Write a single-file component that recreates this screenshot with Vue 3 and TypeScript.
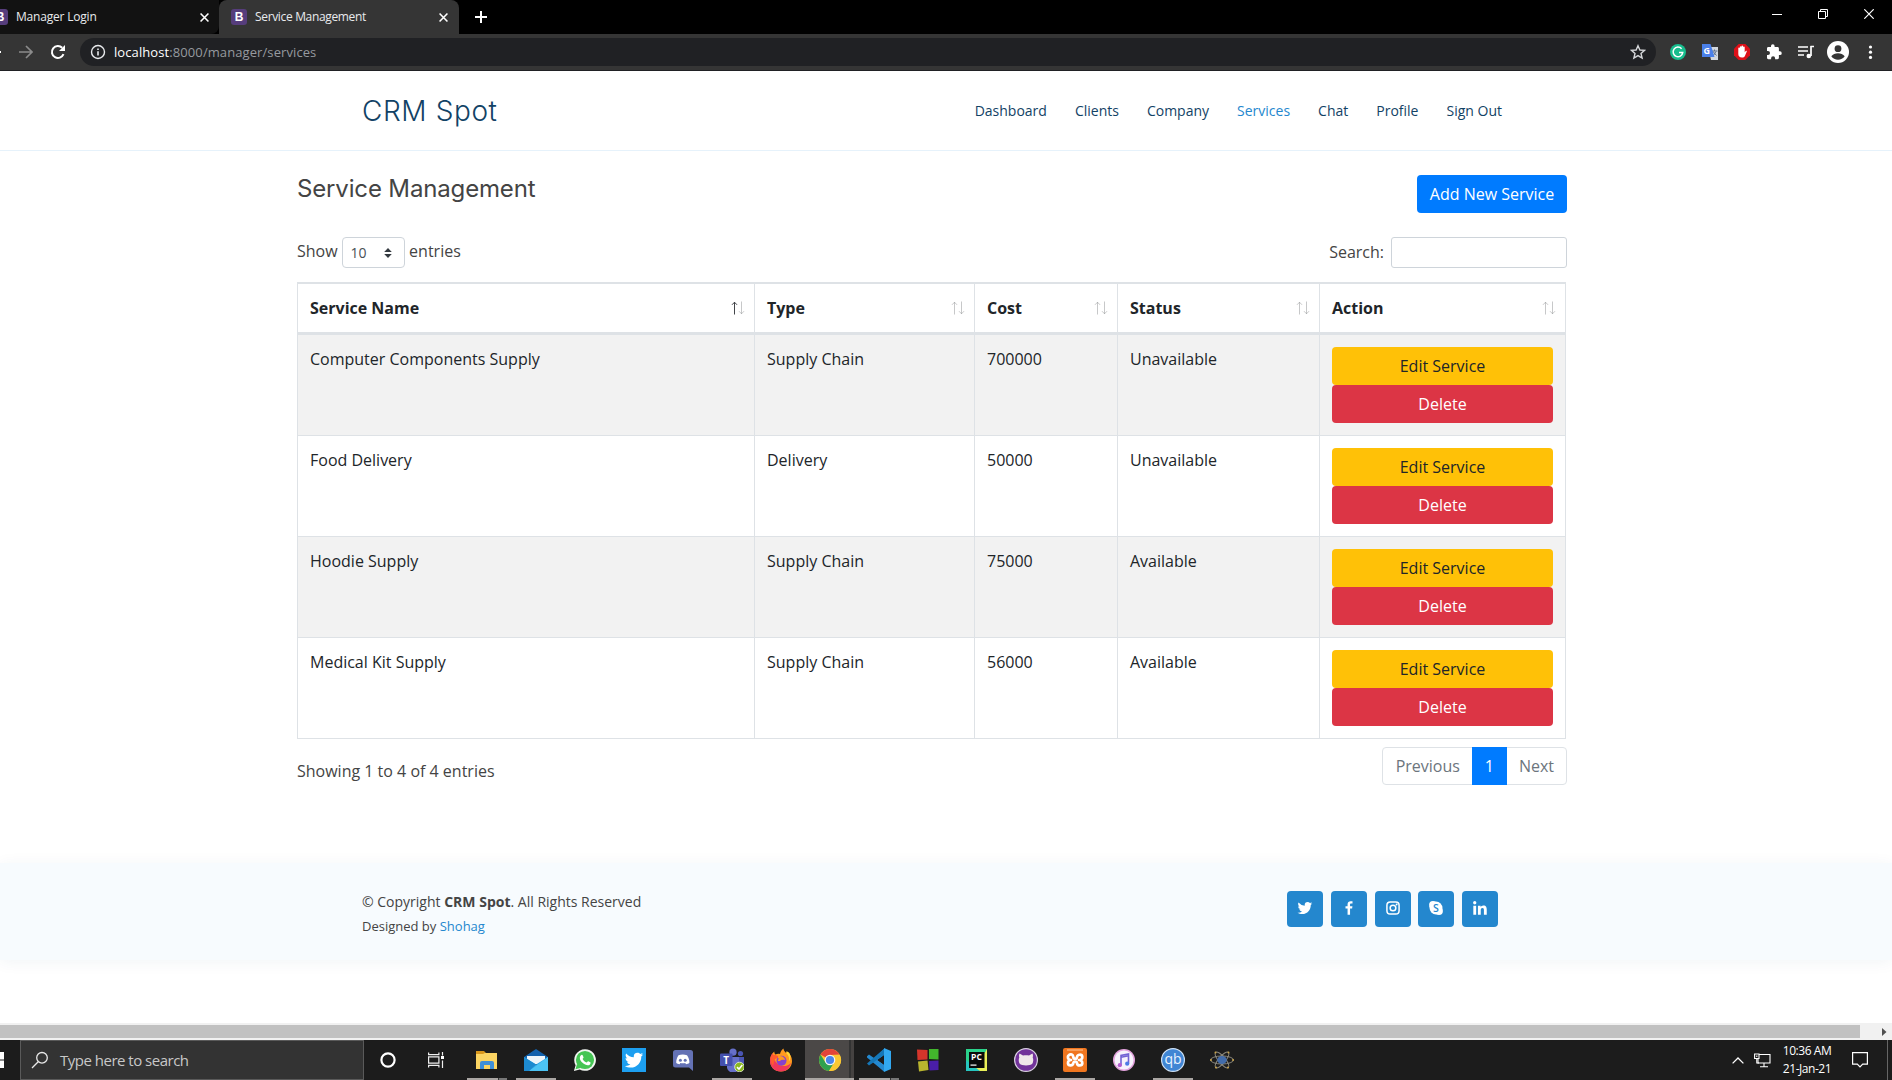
<script setup lang="ts">
interface Service { name: string; type: string; cost: string; status: string }
interface TaskIcon { id: string; art: string; run?: 'full' | 'stack'; active?: boolean }

const tabs = [
  { title: 'Manager Login', active: false },
  { title: 'Service Management', active: true },
]

const nav: string[] = ['Dashboard', 'Clients', 'Company', 'Services', 'Chat', 'Profile', 'Sign Out']
const columns: string[] = ['Service Name', 'Type', 'Cost', 'Status', 'Action']

const services: Service[] = [
  { name: 'Computer Components Supply', type: 'Supply Chain', cost: '700000', status: 'Unavailable' },
  { name: 'Food Delivery', type: 'Delivery', cost: '50000', status: 'Unavailable' },
  { name: 'Hoodie Supply', type: 'Supply Chain', cost: '75000', status: 'Available' },
  { name: 'Medical Kit Supply', type: 'Supply Chain', cost: '56000', status: 'Available' },
]

const bird = 'M19.633 7.997c.013.175.013.349.013.523 0 5.325-4.053 11.461-11.46 11.461-2.282 0-4.402-.661-6.186-1.809.324.037.636.05.973.05a8.07 8.07 0 0 0 5.001-1.721 4.036 4.036 0 0 1-3.767-2.793c.249.037.499.062.761.062.361 0 .724-.05 1.061-.137a4.027 4.027 0 0 1-3.23-3.953v-.05c.537.299 1.16.486 1.82.511a4.022 4.022 0 0 1-1.796-3.354c0-.748.199-1.434.548-2.032a11.457 11.457 0 0 0 8.306 4.215c-.062-.3-.1-.611-.1-.923a4.026 4.026 0 0 1 4.028-4.028c1.16 0 2.207.486 2.943 1.272a7.957 7.957 0 0 0 2.556-.973 4.02 4.02 0 0 1-1.771 2.22 8.073 8.073 0 0 0 2.319-.624 8.645 8.645 0 0 1-2.019 2.083z'

const socials = [
  { id: 'twitter', art: `<path d="${bird}"/>` },
  { id: 'facebook', art: '<path d="M13.397 20.997v-8.196h2.765l.411-3.209h-3.176V7.548c0-.926.258-1.56 1.587-1.56h1.684V3.127A22.336 22.336 0 0 0 14.201 3c-2.444 0-4.122 1.492-4.122 4.231v2.355H7.332v3.209h2.753v8.202h3.312z"/>' },
  { id: 'instagram', art: '<rect x="3.9" y="3.9" width="16.2" height="16.2" rx="4.4" fill="none" stroke="#fff" stroke-width="2"/><circle cx="12" cy="12" r="3.8" fill="none" stroke="#fff" stroke-width="2"/><circle cx="16.8" cy="7.2" r="1.3"/>' },
  { id: 'skype', art: '<circle cx="8" cy="8" r="5.2"/><circle cx="16" cy="16" r="5.2"/><circle cx="12" cy="12" r="8.6"/><text x="12" y="17" text-anchor="middle" font-family="Open Sans, sans-serif" font-weight="600" font-size="14" fill="#2487ce">S</text>' },
  { id: 'linkedin', art: '<circle cx="4.983" cy="5.009" r="2.188"/><path d="M9.237 8.855v12.139h3.769v-6.003c0-1.584.298-3.118 2.262-3.118 1.937 0 1.961 1.811 1.961 3.218v5.904H21v-6.657c0-3.27-.704-5.783-4.526-5.783-1.835 0-3.065 1.007-3.568 1.96h-.051v-1.66H9.237zm-6.142 0H6.87v12.139H3.095z"/>' },
]

const taskIcons: TaskIcon[] = [
  { id: 'explorer', run: 'stack', art: '<path d="M1 3h8l2 2h11v4H1z" fill="#d9971c"/><path d="M1 6h7l2-1h12v16H1z" fill="#fbd462"/><path d="M5 21v-6a2 2 0 0 1 2-2h10a2 2 0 0 1 2 2v6h-4v-4H9v4z" fill="#3f8fd8"/>' },
  { id: 'mail', run: 'full', art: '<path d="M0 9 12 1l12 8v3H0z" fill="#1261ad"/><path d="M3 8h18v8H3z" fill="#eef5fa"/><path d="M0 9l12 7.5L24 9v14H0z" fill="#2ea5e4"/><path d="M24 9v14H5z" fill="#4cc3f4"/><path d="M0 9l12 7.5L5 23H0z" fill="#1d8ad0"/>' },
  { id: 'whatsapp', art: '<path d="M12 1.200a10.800 10.800 0 1 1-5.200 20.200L.9 23l1.700-5.700A10.800 10.800 0 0 1 12 1.200z" fill="#f1f6f1"/><circle cx="12" cy="12" r="9.100" fill="#45c554"/><path d="M2.500 21.300l1.600-5.500 4 4z" fill="#45c554"/><path d="M7.900 7.300c.8-.9 1.500-.7 1.900.2l.7 1.700c.2.600-.7 1.300-.9 1.700 1 1.900 2.300 3 4.100 3.700.5-.3 1-1.600 1.600-1.300l2 1c.7.4.1 2-.9 2.600-3 1.700-9.700-2.900-9.600-7.100 0-.9.4-1.900 1.100-2.500z" fill="#fff"/>' },
  { id: 'twitter', art: `<path d="M0 0h24v24H0z" fill="#1d9ff0"/><g transform="translate(1 1) scale(.93)"><path d="${bird}" fill="#fff"/></g>` },
  { id: 'discord', art: '<path d="M4.500 2h15A2.500 2.500 0 0 1 22 4.500V23l-4-3.500H4.500A2.500 2.500 0 0 1 2 17V4.500A2.500 2.500 0 0 1 4.500 2z" fill="#6472b5"/><path d="M7.500 7.200c2.500-1 6-1 8.500 0 1.700 2.400 2.500 5 2.400 7.500-1 1-2.200 1.400-3.400 1.500l-.8-1.200c-1.500.4-3.300.4-4.800 0l-.9 1.200c-1.200-.1-2.400-.5-3.300-1.500 0-2.600.7-5.100 2.300-7.500z" fill="#fff"/><circle cx="9.400" cy="12.200" r="1.500" fill="#6472b5"/><circle cx="14.200" cy="12.200" r="1.500" fill="#6472b5"/>' },
  { id: 'teams', run: 'full', art: '<circle cx="13" cy="4.200" r="3.600" fill="#6670c9"/><circle cx="20.500" cy="5.500" r="2.600" fill="#4a55b3"/><path d="M16 9h8v8a5 5 0 0 1-6 4.500z" fill="#4a55b3"/><path d="M7 9h12v8a6 6 0 0 1-12 3z" fill="#6670c9"/><rect x="0" y="5.500" width="12.500" height="12.500" rx="1" fill="#4450ae"/><text x="6.200" y="15.600" text-anchor="middle" font-family="Open Sans, sans-serif" font-weight="700" font-size="10" fill="#fff">T</text><circle cx="19.500" cy="19" r="4.800" fill="#8ab81e" stroke="#eef4dc" stroke-width=".8"/><path d="m17 19.100 2 2 3.300-4" fill="none" stroke="#fff" stroke-width="1.500"/>' },
  { id: 'firefox', art: '<path d="M12 23.500C5.400 23.500 1 18.700 1 13c0-4 1.800-7.500 4.300-9.500 0 1.500.4 2.300 1.200 3C8 5.500 10 5.500 11 6c.5-2.500 1.800-4.300 3.500-5.500.2 2.300 1.300 3.200 2.700 4.500.4-.5.500-1 .5-1.700C21.500 6 23 9.500 23 13c0 6-4.600 10.500-11 10.500z" fill="#ff9a1f"/><path d="M12 23.500C5.400 23.500 1 18.700 1 13c0-3 .9-5.800 2.500-8 .3 7 5.500 14 13 13 2-.3 4-1.500 5.500-3-1.200 5-5 8.500-10 8.500z" fill="#f0385a"/><path d="M2 8c1-1 3-1.500 4.500-1L11 9 6 11 4 18C1.500 15 1.300 11 2 8z" fill="#ff5b2e"/><circle cx="12.500" cy="12.700" r="5" fill="#8742cc"/><path d="M9 9c2 .5 4 .2 5 1.500-2 0-4 1-4 2.500" fill="none" stroke="#ff9a1f" stroke-width="2.400"/><path d="M14.500.5c.2 2.300 1.300 3.200 2.700 4.500 2.800 2.500 3.300 5.500 2.600 8.500 2-1.700 2-6 .7-8.200-.8-1-2-1.500-2.800-2-.2.700-.1 1.200-.5 1.700C15.800 3.700 14.700 2.800 14.500.5z" fill="#ffd93a"/>' },
  { id: 'chrome', active: true, art: '<circle cx="12" cy="12" r="11" fill="#fbc832"/><path d="M12 12 2.500 6.500A11 11 0 0 1 21.500 6.500L12 7z" fill="#e2443a"/><path d="M2.500 6.500A11 11 0 0 0 11 23l5.500-8.500L12 12 7.500 14.500z" fill="#2fa150"/><path d="M12 7h9.800A11 11 0 0 1 11 23l5.300-8.500z" fill="#fbc832"/><circle cx="12" cy="12" r="5.300" fill="#f5f5f5"/><circle cx="12" cy="12" r="4.100" fill="#4a86ea"/>' },
  { id: 'vscode', run: 'stack', art: '<path d="M17 1 5.500 12 17 23.500V17l-7-5 7-5z" fill="#2a9be6"/><path d="M0 8.200 2 6.500 17 17v6.500L0 9.500z" fill="#2489d0"/><path d="M0 15.500 17 .8V7L2 17.500z" fill="#1577b8"/><path d="M17 0l7 3v18l-7 3z" fill="#32a8f0"/>' },
  { id: 'blocks', art: '<path d="M1 1.500 11.500 2v9.500L1.500 12z" fill="#d5352b"/><path d="M13 1h9.500v10.500L13 11z" fill="#42b62c"/><path d="M2 13.500l9.500-1 1 9.500L3 23.500z" fill="#b9b52e"/><path d="M13 13l9.500-.5V22l-9 .5z" fill="#4a1ea8"/>' },
  { id: 'pycharm', art: '<path d="M1 1h21v22H1z" fill="#2bd28c"/><path d="M22 1v22H9z" fill="#e9ef58"/><path d="M1 23V12l14 11z" fill="#27c6c0"/><path d="M4 4h15.500v16H4z" fill="#0a0a0a"/><text x="11.500" y="12.300" text-anchor="middle" font-family="Open Sans, sans-serif" font-weight="700" font-size="8.500" fill="#fff">PC</text><path d="M5.500 16.500h6v1.200h-6z" fill="#fff"/>' },
  { id: 'github', art: '<circle cx="12" cy="12" r="11.400" fill="#72339a" stroke="#d8cfe0" stroke-width="1.200"/><path d="M5.500 5.500 9 7.500c2-.5 4-.5 6 0l3.500-2c.6 1.500.6 2.800.2 4 .8 1.300.8 4.500-.4 6.200-2 2.300-10.600 2.300-12.600 0-1.200-1.700-1.200-4.900-.4-6.200-.4-1.200-.4-2.500.2-4z" fill="#f0e8ea"/>' },
  { id: 'xampp', run: 'full', art: '<rect width="24" height="24" rx="2" fill="#f0761f"/><path d="M4 2h16" stroke="#ffc898"/><path d="M5.500 7.300C8 5.500 10 6.500 10.300 9c.3 2.300 3.400 2.300 3.700 0 .4-3 5-3 5.300-.2.200 2-1.500 3.200-3.300 3.200 1.800 0 3.500 1.400 3.300 3.400-.3 2.700-4.900 2.700-5.300-.2-.3-2.300-3.400-2.300-3.700 0-.4 2.900-5 2.900-5.300.2C4.800 13.400 6.200 12 8 12c-1.800 0-3.200-1.200-3.100-3 0-.7.200-1.200.6-1.700" fill="none" stroke="#fff" stroke-width="2.700" stroke-linejoin="round"/>' },
  { id: 'itunes', art: '<circle cx="12" cy="12" r="11" fill="#e3a3dd"/><circle cx="12" cy="12" r="9.500" fill="#f7f2fc"/><path d="M9 17.300V7.500l7.500-1.600v9.600M9 9.300l7.500-1.600" fill="none" stroke="#7362d4" stroke-width="1.600"/><circle cx="7.800" cy="17.200" r="2.100" fill="#b45cd0"/><circle cx="15.200" cy="15.700" r="2.100" fill="#4d7be6"/>' },
  { id: 'qbittorrent', run: 'full', art: '<circle cx="12" cy="12" r="11.400" fill="#4086d4" stroke="#cfe2f6" stroke-width="1.200"/><text x="12" y="16" text-anchor="middle" font-family="Open Sans, sans-serif" font-size="14" fill="#eaf4ff">qb</text>' },
  { id: 'atom', art: '<g fill="none" stroke="#8a877c" stroke-width="1"><ellipse cx="12" cy="12" rx="11.500" ry="4"/><ellipse cx="12" cy="12" rx="10" ry="3.400" transform="rotate(50 12 12)"/><ellipse cx="12" cy="12" rx="10" ry="3.400" transform="rotate(-50 12 12)"/></g><ellipse cx="12" cy="12" rx="4.800" ry="4" fill="#426cab"/><g fill="#c9a348"><circle cx="5.500" cy="4.500" r="1"/><circle cx="18.500" cy="4.500" r="1"/><circle cx="1" cy="12" r="1"/><circle cx="23" cy="12" r="1"/><circle cx="6" cy="19.500" r="1"/><circle cx="18" cy="19.500" r="1"/></g>' },
]
</script>

<template>
  <div class="screen">
    <header class="tabstrip">
      <div v-for="t in tabs" :key="t.title" class="tab" :class="{ on: t.active }">
        <span class="favicon">B</span>
        <span class="tab-title">{{ t.title }}</span>
        <svg class="tab-x" width="9" height="9" viewBox="0 0 8 8"><path d="M.5.5l7 7M7.500.5l-7 7" stroke="#fff" stroke-width="1.400" /></svg>
      </div>
      <svg class="plus" width="12" height="12" viewBox="0 0 12 12"><path d="M6 0v12M0 6h12" stroke="#fff" stroke-width="2" /></svg>
      <div class="winctl">
        <svg width="10" height="10" viewBox="0 0 10 10"><path d="M0 5.500h10" stroke="#fff" /></svg>
        <svg width="10" height="10" viewBox="0 0 10 10" fill="none" stroke="#fff"><path d="M.5 2.500h7v7h-7zM2.500 2.500v-2h7v7h-2" /></svg>
        <svg width="10" height="10" viewBox="0 0 10 10"><path d="M.3.3l9.400 9.400M9.700.3.3 9.700" stroke="#fff" stroke-width="1.200" /></svg>
      </div>
    </header>

    <div class="toolbar">
      <span class="backtail"></span>
      <svg class="fwd" width="14" height="14" viewBox="0 0 14 14" fill="none" stroke="#8b8b8b" stroke-width="1.700"><path d="M0 7h12.500M7 1l6 6-6 6" /></svg>
      <svg class="reload" width="16" height="16" viewBox="0 0 16 16"><path d="M13.500 10.200A6 6 0 1 1 12.200 3.800" fill="none" stroke="#fff" stroke-width="2" /><path d="M15 1v6H9z" fill="#fff" /></svg>
      <div class="omnibox">
        <svg width="16" height="16" viewBox="0 0 16 16"><circle cx="8" cy="8" r="6.500" fill="none" stroke="#e8eaed" stroke-width="1.400" /><path d="M7.200 7.200h1.600v4.300H7.200zM7.200 4.500h1.600v1.600H7.200z" fill="#e8eaed" /></svg>
        <span class="url"><b>localhost</b>:8000/manager/services</span>
        <svg class="star" width="16" height="16" viewBox="0 0 16 16"><path d="M8 1.700 9.900 6l4.700.4-3.600 3.100 1.100 4.600L8 11.600l-4.100 2.500L5 9.500 1.400 6.400 6.100 6z" fill="none" stroke="#d5d7da" stroke-width="1.400" /></svg>
      </div>
      <div class="exts">
        <svg viewBox="0 0 24 24" width="24" height="24"><circle cx="12" cy="12" r="8" fill="#17bd8d" /><path d="M15.600 8.800a4.800 4.800 0 1 0 1.100 3.800h-3.700" fill="none" stroke="#fff" stroke-width="1.500" /></svg>
        <svg viewBox="0 0 24 24" width="24" height="24"><path d="M10 7h10v13h-7z" fill="#d2d7de" /><path d="M13.500 11h6M16.500 9.500v1.500m-2 6 3.500-5.500m-3 0 3.500 4" stroke="#5d6f8c" fill="none" /><path d="M4 4h8.500l4 13H4z" fill="#4a80ea" /><text x="8.700" y="13.500" text-anchor="middle" class="glyph" font-size="9">G</text></svg>
        <svg viewBox="0 0 24 24" width="24" height="24"><path d="M8.700 4h6.600L20 8.700v6.600L15.300 20H8.700L4 15.300V8.700z" fill="#dd1018" /><path d="M8.300 12V8.300a.8.8 0 0 1 1.600 0V7a.8.8 0 0 1 1.600 0v-.6a.8.8 0 0 1 1.600 0V7.200a.8.8 0 0 1 1.600 0v5l1-1.200c.7-.6 1.400 0 1 .7l-1.800 4.200c-.6 1.300-1.500 1.700-3 1.700-2.300 0-3.600-1.200-3.600-3.500z" fill="#fff" /></svg>
        <svg viewBox="0 0 24 24" width="24" height="24"><path d="M17.300 11.300h-1V8.400c0-.8-.6-1.400-1.400-1.400H12V6a1.800 1.800 0 0 0-3.600 0v1H5.800c-.8 0-1.400.6-1.400 1.400v2.700h1a2 2 0 0 1 0 4h-1v2.700c0 .8.6 1.400 1.400 1.400h2.700v-1a2 2 0 0 1 4 0v1h2.400c.8 0 1.400-.6 1.400-1.400V15h1a1.850 1.850 0 0 0 0-3.700z" fill="#fff" transform="translate(.6 0)" /></svg>
        <svg viewBox="0 0 24 24" width="24" height="24"><path d="M4 7h10M4 11h10M4 15h6" stroke="#fff" stroke-width="1.500" /><path d="M16.500 6.500h3.500M17 6v10" stroke="#fff" stroke-width="1.700" fill="none" /><circle cx="14.800" cy="16" r="2.300" fill="#fff" /></svg>
        <svg viewBox="0 0 24 24" width="24" height="24"><circle cx="12" cy="12" r="11" fill="#fff" /><circle cx="12" cy="8.700" r="3.400" fill="#353535" /><path d="M5.300 16.200c1.500-2 4-3 6.700-3s5.200 1 6.700 3a8 8 0 0 1-13.400 0z" fill="#353535" /></svg>
        <svg viewBox="0 0 24 24" width="24" height="24" fill="#fff"><circle cx="12.500" cy="7" r="1.600" /><circle cx="12.500" cy="12.200" r="1.600" /><circle cx="12.500" cy="17.400" r="1.600" /></svg>
      </div>
    </div>

    <main class="page">
      <div class="site-head">
        <span class="logo">CRM Spot</span>
        <nav><a v-for="n in nav" :key="n" :class="{ cur: n === 'Services' }">{{ n }}</a></nav>
      </div>

      <section class="content">
        <div class="title-row">
          <h1>Service Management</h1>
          <button class="btn primary">Add New Service</button>
        </div>
        <div class="tools">
          <div class="length">
            <span>Show</span>
            <span class="select">10
              <svg width="8" height="10" viewBox="0 0 8 10"><path d="M4 0l3.800 4H.2zM4 10 .2 6h7.600z" fill="#343a40" /></svg>
            </span>
            <span>entries</span>
          </div>
          <label class="search"><span>Search:</span><input type="text" /></label>
        </div>

        <table>
          <colgroup><col class="c1" /><col class="c2" /><col class="c3" /><col class="c4" /><col class="c5" /></colgroup>
          <thead>
            <tr>
              <th v-for="(c, i) in columns" :key="c">
                <div class="th">
                  <span>{{ c }}</span>
                  <svg width="14" height="14" viewBox="0 0 14 14" fill="none" stroke="#212529">
                    <path d="M3.500 13.500V1.500M1 3.800l2.500-2.600L6 3.800" :opacity="i === 0 ? 0.85 : 0.25" />
                    <path d="M10.500.5v12M8 10.200l2.500 2.600 2.500-2.600" opacity=".25" />
                  </svg>
                </div>
              </th>
            </tr>
          </thead>
          <tbody>
            <tr v-for="s in services" :key="s.name">
              <td>{{ s.name }}</td><td>{{ s.type }}</td><td>{{ s.cost }}</td><td>{{ s.status }}</td>
              <td>
                <button class="btn warn">Edit Service</button>
                <button class="btn danger">Delete</button>
              </td>
            </tr>
          </tbody>
        </table>

        <div class="below">
          <span class="info">Showing 1 to 4 of 4 entries</span>
          <div class="pager"><span class="prev">Previous</span><span class="cur">1</span><span class="next">Next</span></div>
        </div>
      </section>

      <footer>
        <div class="credits">
          <div class="copy">© Copyright <strong>CRM Spot</strong>. All Rights Reserved</div>
          <div class="by">Designed by <a>Shohag</a></div>
        </div>
        <div class="social">
          <a v-for="s in socials" :key="s.id"><svg width="18" height="18" viewBox="0 0 24 24" fill="#fff" v-html="s.art"></svg></a>
        </div>
      </footer>
    </main>

    <div class="hscroll">
      <div class="thumb"></div>
      <svg width="5" height="8" viewBox="0 0 5 8"><path d="M0 0l4.500 4L0 8z" fill="#505050" /></svg>
    </div>

    <div class="taskbar">
      <svg class="start" width="4" height="16" viewBox="0 0 4 16"><path d="M0 0h4v7.500H0zM0 8.500h4V16H0z" fill="#fff" /></svg>
      <div class="tb-search">
        <svg width="18" height="18" viewBox="0 0 18 18" fill="none" stroke="#e8e8e8" stroke-width="1.300"><circle cx="11" cy="6.800" r="5.300" /><path d="M7.200 10.800 1 17" /></svg>
        <span>Type here to search</span>
      </div>
      <div class="cell cortana"><svg width="16" height="16" viewBox="0 0 16 16"><circle cx="8" cy="8" r="6.600" fill="none" stroke="#fff" stroke-width="2.200" /></svg></div>
      <div class="cell taskview"><svg width="16" height="16" viewBox="0 0 16 16" fill="none" stroke="#eee" stroke-width="1.200"><path d="M.6.500v2.200h10.300V.5M.6 15.500v-2.200h10.300v2.200M.6 4.800h10.300v6.400H.6zM14.500 0v3.500M14.500 8.500V16" /><path d="M13 4h3v3h-3z" fill="#fff" stroke="none" /></svg></div>
      <div v-for="t in taskIcons" :key="t.id" class="cell app" :class="[t.run, { active: t.active }]">
        <svg width="24" height="24" viewBox="0 0 24 24" v-html="t.art"></svg>
      </div>
      <div class="tray">
        <svg class="chev" width="12" height="7" viewBox="0 0 12 7"><path d="M.6 6.400 6 1l5.400 5.400" fill="none" stroke="#fff" stroke-width="1.300" /></svg>
        <svg class="net" width="17" height="15" viewBox="0 0 17 15" fill="none" stroke="#fff" stroke-width="1.100"><path d="M5 1.500h11v8.500H4V6M10 10v3.500M6 13.700h8" /><path d="M.6 1h4.400v4.500H.6zM2.800 2.500v1.500M2.800 5.500V10H5" /></svg>
        <div class="clock"><span>10:36 AM</span><span>21-Jan-21</span></div>
        <svg class="note" width="16" height="16" viewBox="0 0 16 16"><path d="M.6.600h14.800v11.500h-4.700L8 14.800l-2.700-2.700H.6z" fill="none" stroke="#fff" stroke-width="1.200" /></svg>
        <i class="edge"></i>
      </div>
    </div>
  </div>
</template>

<style>
body { margin: 0; overflow: hidden; }
</style>

<style scoped>
* { box-sizing: border-box; }
.screen { width: 1892px; height: 1080px; display: flex; flex-direction: column; overflow: hidden; background: #fff; font: 400 16px/24px "Open Sans", "Noto Sans", sans-serif; color: #444; }

.tabstrip { height: 34px; flex: none; display: flex; background: #000; }
.tab { height: 34px; display: flex; align-items: center; background: #121212; color: #e8eaed; font-size: 12px; line-height: 16px; }
.tab:first-child { width: 219px; padding-right: 11px; border-radius: 0 0 8px 0; }
.tab.on { width: 240px; padding: 0 12px; background: #353535; border-radius: 8px 8px 0 0; }
.favicon { width: 16px; height: 16px; flex: none; border-radius: 3px; background: #563d7c; color: #fff; font: 700 12px/16px "Liberation Sans", sans-serif; text-align: center; }
.tab:first-child .favicon { margin-left: -8px; }
.tab-title { margin-left: 8px; letter-spacing: -.2px; white-space: nowrap; }
.tab.on .tab-title { letter-spacing: -.34px; }
.tab-x { margin-left: auto; margin-right: -1px; }
.plus { margin: 11px 0 0 16px; }
.winctl { margin: 9px 18px 0 auto; display: flex; gap: 36px; }

.toolbar { height: 37px; flex: none; display: flex; align-items: center; background: #353535; border-bottom: 1px solid #202124; }
.backtail { width: 1px; height: 2px; background: #fff; }
.fwd { margin-left: 18px; }
.reload { margin-left: 17px; }
.omnibox { margin-left: 14px; width: 1576px; height: 28px; border-radius: 14px; background: #202124; display: flex; align-items: center; padding: 0 10px; }
.url { margin-left: 8px; font-size: 13px; color: #969a9f; white-space: nowrap; letter-spacing: .09px; }
.url b { font-weight: 400; color: #fff; }
.star { margin-left: auto; }
.exts { margin-left: 10px; display: flex; gap: 8px; }
.glyph { font-family: "Open Sans", sans-serif; font-weight: 700; fill: #fff; }

.page { flex: 1; min-height: 0; overflow: hidden; background: #fff; }
.site-head { height: 80px; border-bottom: 1px solid #e6f2fb; padding: 0 390px 0 362px; display: flex; justify-content: space-between; align-items: center; }
.logo { font: 300 28px/36px Inter, Lato, sans-serif; letter-spacing: .6px; color: #124265; white-space: nowrap; }
nav { display: flex; gap: 28px; font-size: 14px; color: #124265; white-space: nowrap; }
nav .cur { color: #2487ce; }

.content { margin-left: 297px; width: 1270px; }
.title-row { display: flex; justify-content: space-between; padding-top: 24px; height: 86px; }
h1 { margin: 0; font: 400 24px/28px Inter, Lato, sans-serif; letter-spacing: -.15px; color: #444; white-space: nowrap; }
.btn { display: block; height: 38px; border: 0; border-radius: 4px; padding: 0; font: inherit; line-height: 38px; text-align: center; width: 100%; white-space: nowrap; }
.primary { width: 150px; background: #007bff; color: #fff; }
.warn { background: #ffc107; color: #212529; }
.danger { background: #dc3545; color: #fff; }
.tools { display: flex; justify-content: space-between; height: 45px; }
.length { display: flex; height: 31px; line-height: 29px; }
.select { margin: 0 4.500px 0 4px; width: 63px; height: 31px; border: 1px solid #ced4da; border-radius: 4px; padding: 0 12px 0 8px; font-size: 14px; line-height: 31px; color: #495057; display: flex; align-items: center; justify-content: space-between; }
.search { display: flex; line-height: 31px; }
.search input { margin-left: 7px; width: 176px; height: 31px; border: 1px solid #ced4da; border-radius: 3px; padding: 0 8px; }

table { width: 1269px; table-layout: fixed; border-collapse: separate; border-spacing: 0; border: 1px solid #dee2e6; color: #212529; }
.c1 { width: 457px; } .c2 { width: 220px; } .c3 { width: 143px; } .c4 { width: 202px; } .c5 { width: 245px; }
th, td { padding: 12px; border-top: 1px solid #dee2e6; border-right: 1px solid #dee2e6; text-align: left; vertical-align: top; }
th:last-child, td:last-child { border-right: 0; }
th { border-bottom: 2px solid #dee2e6; font-weight: 700; }
.th { display: flex; align-items: center; justify-content: space-between; margin-right: -3px; }
tbody tr:nth-child(odd) { background: #f2f2f2; }

.below { display: flex; justify-content: space-between; }
.info { margin-top: 20px; }
.pager { margin-top: 8px; height: 38px; display: flex; line-height: 36px; border: 1px solid #dee2e6; border-radius: 4px; color: #6c757d; }
.pager span { padding: 0 12px; }
.pager .prev { padding: 0 12px 0 13px; }
.pager .cur { width: 35px; margin: -1px 0; padding: 0; text-align: center; line-height: 38px; background: #007bff; color: #fff; }

footer { margin-top: 78px; height: 97px; padding: 28px 394px 0 362px; display: flex; justify-content: space-between; background: #f7fbfe; box-shadow: 0 2px 15px rgba(18, 66, 101, .06); }
.copy { font-size: 14px; line-height: 21px; }
.by { font-size: 13px; line-height: 20px; padding-top: 4px; }
.by a { color: #2487ce; }
.social { display: flex; gap: 7.750px; }
.social a { width: 36px; height: 36px; border-radius: 4px; background: #2487ce; display: flex; align-items: center; justify-content: center; }
.social svg { margin-bottom: 2px; }

.hscroll { height: 17px; flex: none; display: flex; align-items: center; background: #f1f1f1; }
.thumb { width: 1860px; height: 13px; background: #c1c1c1; margin-right: 22px; }

.taskbar { height: 40px; flex: none; display: flex; background: #1c1c1c; color: #fff; }
.start { margin-top: 12px; }
.tb-search { margin-left: 16px; width: 344px; height: 40px; border: 1px solid #5a5a5a; background: #333; display: flex; align-items: center; padding-left: 10px; color: #c8c8c8; font-size: 15px; }
.tb-search span { margin-left: 11px; letter-spacing: -.5px; }
.cell { display: flex; align-items: center; justify-content: center; height: 40px; position: relative; }
.cortana { width: 48px; }
.taskview { width: 48px; margin-right: 2px; }
.app { width: 49px; }
.app.full::after, .app.stack::after { content: ""; position: absolute; left: 5px; bottom: 0; width: 40px; height: 2px; background: #aaa6a3; }
.app.stack::after { background: linear-gradient(90deg, #aaa6a3 31px, #333 31px, #333 32px, #777 32px); }
.app.active { background: linear-gradient(90deg, #4b4847 44px, #333 44px, #333 46px, #454241 46px); box-shadow: inset 0 -2px #aaa6a3; }
.tray { margin-left: auto; display: flex; align-items: center; height: 40px; }
.net { margin-left: 10px; }
.clock { margin-left: 11px; width: 50px; display: flex; flex-direction: column; align-items: center; font-size: 12px; line-height: 18px; letter-spacing: -.45px; white-space: nowrap; }
.note { margin-left: 20px; }
.edge { margin-left: 19px; width: 1px; height: 40px; background: #666; margin-right: 4px; }
</style>
